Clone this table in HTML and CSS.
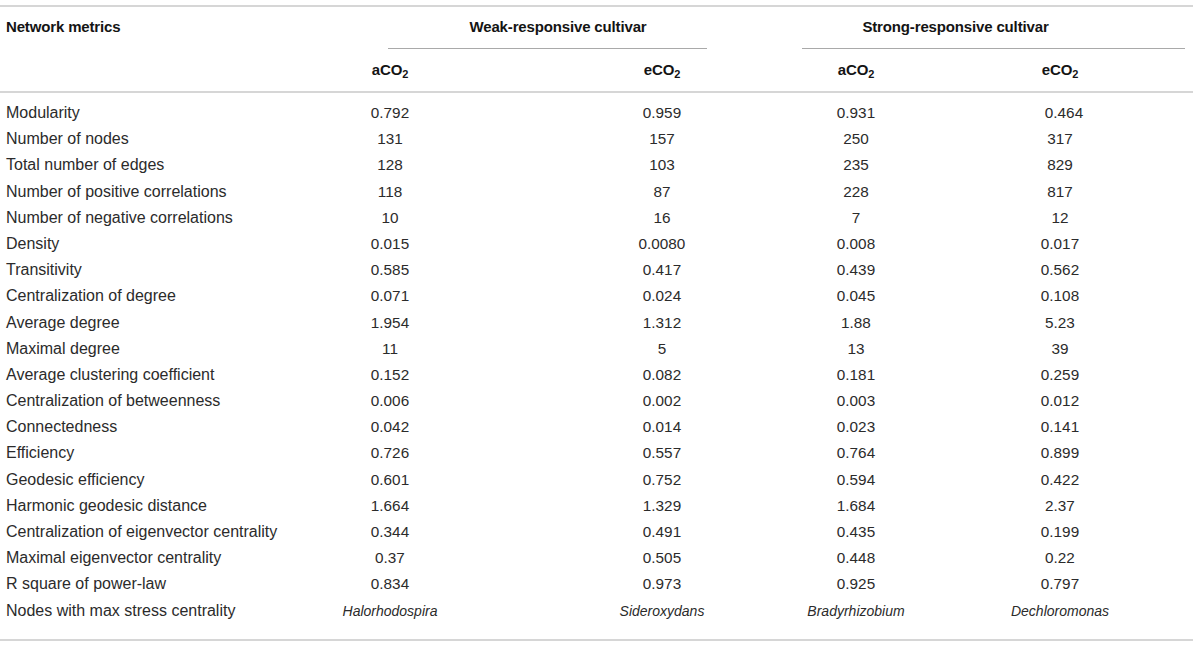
FILE: index.html
```html
<!DOCTYPE html>
<html>
<head>
<meta charset="utf-8">
<link rel="stylesheet" href="styles.css">
</head>
<body>
<div class="table">
  <div class="hdr1">
    <div class="label head">Network metrics</div>
    <div class="grp weak head">Weak-responsive cultivar</div>
    <div class="grp strong head">Strong-responsive cultivar</div>
  </div>
  <div class="hdr2">
    <div class="label"></div>
    <div class="c1 head">aCO<sub>2</sub></div>
    <div class="c2 head">eCO<sub>2</sub></div>
    <div class="c3 head">aCO<sub>2</sub></div>
    <div class="c4 head">eCO<sub>2</sub></div>
  </div>
  <div class="tbody">
    <div class="row"><div class="label">Modularity</div><div class="c1 num">0.792</div><div class="c2 num">0.959</div><div class="c3 num">0.931</div><div class="c4 num shift">0.464</div></div>
    <div class="row"><div class="label">Number of nodes</div><div class="c1 num">131</div><div class="c2 num">157</div><div class="c3 num">250</div><div class="c4 num">317</div></div>
    <div class="row"><div class="label">Total number of edges</div><div class="c1 num">128</div><div class="c2 num">103</div><div class="c3 num">235</div><div class="c4 num">829</div></div>
    <div class="row"><div class="label">Number of positive correlations</div><div class="c1 num">118</div><div class="c2 num">87</div><div class="c3 num">228</div><div class="c4 num">817</div></div>
    <div class="row"><div class="label">Number of negative correlations</div><div class="c1 num">10</div><div class="c2 num">16</div><div class="c3 num">7</div><div class="c4 num">12</div></div>
    <div class="row"><div class="label">Density</div><div class="c1 num">0.015</div><div class="c2 num">0.0080</div><div class="c3 num">0.008</div><div class="c4 num">0.017</div></div>
    <div class="row"><div class="label">Transitivity</div><div class="c1 num">0.585</div><div class="c2 num">0.417</div><div class="c3 num">0.439</div><div class="c4 num">0.562</div></div>
    <div class="row"><div class="label">Centralization of degree</div><div class="c1 num">0.071</div><div class="c2 num">0.024</div><div class="c3 num">0.045</div><div class="c4 num">0.108</div></div>
    <div class="row"><div class="label">Average degree</div><div class="c1 num">1.954</div><div class="c2 num">1.312</div><div class="c3 num">1.88</div><div class="c4 num">5.23</div></div>
    <div class="row"><div class="label">Maximal degree</div><div class="c1 num">11</div><div class="c2 num">5</div><div class="c3 num">13</div><div class="c4 num">39</div></div>
    <div class="row"><div class="label">Average clustering coefficient</div><div class="c1 num">0.152</div><div class="c2 num">0.082</div><div class="c3 num">0.181</div><div class="c4 num">0.259</div></div>
    <div class="row"><div class="label">Centralization of betweenness</div><div class="c1 num">0.006</div><div class="c2 num">0.002</div><div class="c3 num">0.003</div><div class="c4 num">0.012</div></div>
    <div class="row"><div class="label">Connectedness</div><div class="c1 num">0.042</div><div class="c2 num">0.014</div><div class="c3 num">0.023</div><div class="c4 num">0.141</div></div>
    <div class="row"><div class="label">Efficiency</div><div class="c1 num">0.726</div><div class="c2 num">0.557</div><div class="c3 num">0.764</div><div class="c4 num">0.899</div></div>
    <div class="row"><div class="label">Geodesic efficiency</div><div class="c1 num">0.601</div><div class="c2 num">0.752</div><div class="c3 num">0.594</div><div class="c4 num">0.422</div></div>
    <div class="row"><div class="label">Harmonic geodesic distance</div><div class="c1 num">1.664</div><div class="c2 num">1.329</div><div class="c3 num">1.684</div><div class="c4 num">2.37</div></div>
    <div class="row"><div class="label">Centralization of eigenvector centrality</div><div class="c1 num">0.344</div><div class="c2 num">0.491</div><div class="c3 num">0.435</div><div class="c4 num">0.199</div></div>
    <div class="row"><div class="label">Maximal eigenvector centrality</div><div class="c1 num">0.37</div><div class="c2 num">0.505</div><div class="c3 num">0.448</div><div class="c4 num">0.22</div></div>
    <div class="row"><div class="label">R square of power-law</div><div class="c1 num">0.834</div><div class="c2 num">0.973</div><div class="c3 num">0.925</div><div class="c4 num">0.797</div></div>
    <div class="row"><div class="label">Nodes with max stress centrality</div><div class="c1 it">Halorhodospira</div><div class="c2 it">Sideroxydans</div><div class="c3 it">Bradyrhizobium</div><div class="c4 it">Dechloromonas</div></div>
  </div>
</div>
</body>
</html>
```
FILE: styles.css
```css
html, body {
  margin: 0;
  padding: 0;
  background: #ffffff;
}
body {
  font-family: "Liberation Sans", Arial, sans-serif;
  color: #2b2b2b;
  font-size: 16px;
}
.table {
  width: 1193px;
  margin-top: 5px;
  border-top: 2px solid #d6d6d6;
}
.hdr1 {
  display: flex;
  height: 42px;
}
.hdr2 {
  display: flex;
  height: 42px;
  align-items: center;
  border-bottom: 2px solid #d6d6d6;
}
.head {
  font-weight: bold;
  font-size: 15px;
  letter-spacing: -0.15px;
  color: #141414;
}
.hdr1 .label {
  padding-top: 11px;
}
.label {
  width: 330px;
  flex: none;
  box-sizing: border-box;
  padding-left: 6px;
  white-space: nowrap;
}
.grp {
  flex: none;
  box-sizing: border-box;
  text-align: center;
  padding-top: 11px;
  border-bottom: 1px solid #a9a9a9;
}
.weak {
  margin-left: 58px;
  width: 319px;
  padding-left: 21px;
}
.strong {
  margin-left: 95px;
  width: 383px;
  padding-right: 76px;
}
.c1, .c2, .c3, .c4 {
  flex: none;
  width: 120px;
  text-align: center;
  white-space: nowrap;
}
.c2 { margin-left: 152px; }
.c3 { margin-left: 74px; }
.c4 { margin-left: 84px; }
.hdr2 .head {
  padding-bottom: 1px;
}
sub {
  font-size: 11px;
  vertical-align: -3px;
  line-height: 0;
}
.tbody {
  padding: 7px 0 15px;
  border-bottom: 2px solid #d6d6d6;
}
.row {
  display: flex;
  height: 26.2px;
  line-height: 26.2px;
  align-items: center;
}
.num {
  font-size: 15.3px;
}
.shift {
  padding-left: 8px;
  box-sizing: border-box;
}
.it {
  font-style: italic;
  font-size: 14px;
}
```
